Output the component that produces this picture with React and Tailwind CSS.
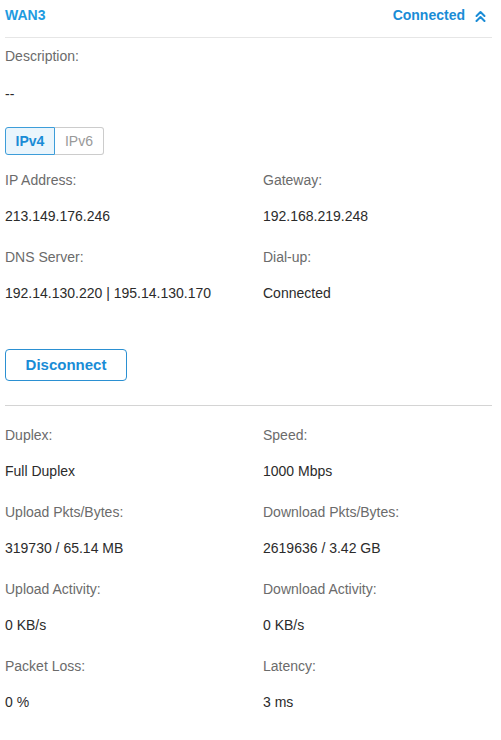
import React, { useState } from 'react';

const ipFields = [
  [
    { label: 'IP Address:', value: '213.149.176.246' },
    { label: 'Gateway:', value: '192.168.219.248' },
  ],
  [
    { label: 'DNS Server:', value: '192.14.130.220 | 195.14.130.170' },
    { label: 'Dial-up:', value: 'Connected' },
  ],
];

const statFields = [
  [
    { label: 'Duplex:', value: 'Full Duplex' },
    { label: 'Speed:', value: '1000 Mbps' },
  ],
  [
    { label: 'Upload Pkts/Bytes:', value: '319730 / 65.14 MB' },
    { label: 'Download Pkts/Bytes:', value: '2619636 / 3.42 GB' },
  ],
  [
    { label: 'Upload Activity:', value: '0 KB/s' },
    { label: 'Download Activity:', value: '0 KB/s' },
  ],
  [
    { label: 'Packet Loss:', value: '0 %' },
    { label: 'Latency:', value: '3 ms' },
  ],
];

// double chevron used as the collapse toggle
const CollapseIcon = () => (
  <svg width="11" height="12" viewBox="0 0 11 12" fill="none" stroke="currentColor" strokeWidth="2" strokeLinecap="round" strokeLinejoin="round">
    <path d="M1.5 6 L5.5 2 L9.5 6" />
    <path d="M1.5 11 L5.5 7 L9.5 11" />
  </svg>
);

const Field = ({ label, value }) => (
  <div className="pb-[5px]">
    <div className="leading-[36px] text-[#6b6b6b]">{label}</div>
    <div className="leading-[36px] text-[#2b2b2b]">{value}</div>
  </div>
);

const FieldGrid = ({ rows }) => (
  <div>
    {rows.map((row, i) => (
      <div key={i} className="grid grid-cols-[258px_1fr]">
        {row.map(f => (
          <Field key={f.label} label={f.label} value={f.value} />
        ))}
      </div>
    ))}
  </div>
);

const App = () => {
  const [proto, setProto] = useState('ipv4');

  return (
    <div
      className="min-h-[740px] bg-white pl-[5px] pr-[9px] text-[14px]"
      style={{ fontFamily: '"Liberation Sans", Arial, sans-serif' }}
    >
      <div className="flex h-[38px] items-center justify-between border-b border-[#e6e6e6] pb-[6px]">
        <span className="font-bold text-[#1e9be0]">WAN3</span>
        <button className="flex items-center gap-[10px] pr-[6px] font-bold text-[#1a8cd6]">
          Connected
          <CollapseIcon />
        </button>
      </div>

      <div className="leading-[36px] text-[#6b6b6b]">Description:</div>
      <div className="leading-[41px] text-[#2b2b2b]">--</div>

      <div className="mt-[12px] flex">
        <button
          onClick={() => setProto('ipv4')}
          className={
            proto === 'ipv4'
              ? 'h-[28px] w-[50px] rounded-l-[3px] border border-[#3d9dd9] bg-[#eaf5fc] font-bold text-[#1a8cd6]'
              : 'h-[28px] w-[50px] rounded-l-[3px] border border-[#cccccc] text-[#999999]'
          }
        >
          IPv4
        </button>
        <button
          onClick={() => setProto('ipv6')}
          className={
            proto === 'ipv6'
              ? 'h-[28px] w-[49px] rounded-r-[3px] border border-l-0 border-[#3d9dd9] bg-[#eaf5fc] font-bold text-[#1a8cd6]'
              : 'h-[28px] w-[49px] rounded-r-[3px] border border-l-0 border-[#cccccc] text-[#999999]'
          }
        >
          IPv6
        </button>
      </div>

      <div className="mt-[7px]">
        <FieldGrid rows={ipFields} />
      </div>

      <button className="mt-[33px] h-[32px] w-[122px] rounded-[4px] border border-[#2b90d2] text-[15px] font-bold text-[#1a8cd6]">
        Disconnect
      </button>

      <div className="mt-[24px] border-t border-[#d4d4d4]" />

      <div className="mt-[11px]">
        <FieldGrid rows={statFields} />
      </div>
    </div>
  );
};

export default App;
